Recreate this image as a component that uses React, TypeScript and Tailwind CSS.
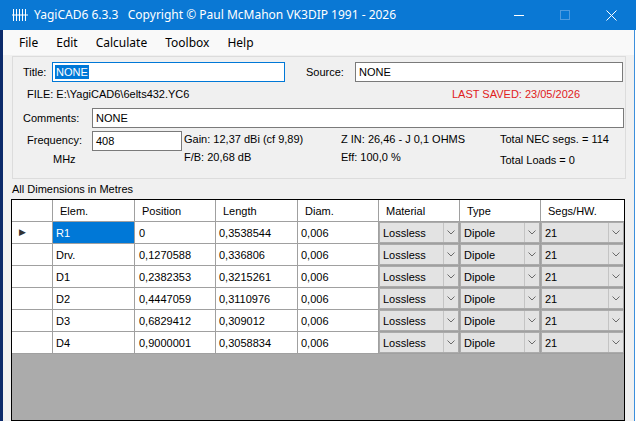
const elements = [
    { name: "R1", pos: "0", len: "0,3538544" },
    { name: "Drv.", pos: "0,1270588", len: "0,336806" },
    { name: "D1", pos: "0,2382353", len: "0,3215261" },
    { name: "D2", pos: "0,4447059", len: "0,3110976" },
    { name: "D3", pos: "0,6829412", len: "0,309012" },
    { name: "D4", pos: "0,9000001", len: "0,3058834" },
];

const menus = ["File", "Edit", "Calculate", "Toolbox", "Help"];

const cols = "grid grid-cols-[41px_82px_81px_82px_81px_81px_81px_83px]";

const AppIcon = () => (
    <svg width="16" height="14" viewBox="0 0 16 14" className="shrink-0">
        <line x1="0" y1="7" x2="16" y2="7" stroke="white" strokeWidth="1" />
        {[1.5, 4.5, 7.5, 10.5, 13.5].map((x) => (
            <line key={x} x1={x} y1="1" x2={x} y2="13" stroke="white" strokeWidth="1" />
        ))}
    </svg>
);

const Combo = ({ value, last }: { value: string; last?: boolean }) => (
    <div className={`h-[22px] border-b border-[#a0a0a0] ${last ? '' : 'border-r'} p-[1px] bg-[#ababab]`}>
        <div className="h-full flex bg-[#e3e3e3]">
            <span className="flex-1 pl-[3px] leading-[21px]">{value}</span>
            <div className="w-[15px] border-l border-[#c4c4c4] flex items-center justify-center">
                <svg width="8" height="5" viewBox="0 0 8 5">
                    <path d="M0.5 0.5 L4 4 L7.5 0.5" fill="none" stroke="#6a6a6a" strokeWidth="1" />
                </svg>
            </div>
        </div>
    </div>
);

const Cell = ({ children, className = "" }: { children?: React.ReactNode; className?: string }) => (
    <div className={`h-[22px] border-r border-b border-[#a0a0a0] leading-[22px] bg-white ${className}`}>
        {children}
    </div>
);

const App = () => {
    return (
        <div className="w-[639px] h-[421px] overflow-hidden flex flex-col bg-white text-black text-[11px] font-['Liberation_Sans',Arial,sans-serif]">
            {/* title bar */}
            <div className="h-[30px] w-[636px] shrink-0 bg-[#0a78d4] text-white flex items-center font-['Noto_Sans',sans-serif]">
                <div className="pl-[12px] pr-[6px]"><AppIcon /></div>
                <span className="text-[12px] whitespace-pre">YagiCAD6 6.3.3   Copyright © Paul McMahon VK3DIP 1991 - 2026</span>
                <div className="ml-auto flex items-center pr-[2px]">
                    <div className="w-[46px] flex justify-center"><div className="w-[10px] h-[1px] bg-white" /></div>
                    <div className="w-[46px] flex justify-center"><div className="w-[10px] h-[10px] border border-[#4f9be0]" /></div>
                    <div className="w-[46px] flex justify-center">
                        <svg width="11" height="11" viewBox="0 0 11 11">
                            <path d="M0.5 0.5 L10.5 10.5 M10.5 0.5 L0.5 10.5" stroke="white" strokeWidth="1" />
                        </svg>
                    </div>
                </div>
            </div>

            <div className="flex-1 flex">
                <div className="w-[3px] bg-[#0c2a6a]" />
                <div className="w-[631px] flex flex-col bg-[#f0f0f0]">
                    {/* menu */}
                    <div className="h-[25px] bg-[#f9f9f9] flex items-center pl-[7px] text-[12px] font-['Noto_Sans',sans-serif]">
                        {menus.map((m) => (
                            <span key={m} className="px-[9px]">{m}</span>
                        ))}
                    </div>

                    {/* group box */}
                    <div className="ml-[9px] mt-[1px] w-[614px] h-[123px] border border-[#dcdcdc] flex flex-col">
                        <div className="flex items-center mt-[5px] h-[20px]">
                            <span className="ml-[10px] w-[29px]">Title:</span>
                            <div className="w-[233px] h-[20px] border border-[#0078d7] bg-white flex items-center pl-[2px]">
                                <span className="bg-[#0078d7] text-white px-[1px] leading-[14px]">NONE</span>
                            </div>
                            <span className="ml-[21px] w-[49px]">Source:</span>
                            <div className="w-[268px] h-[20px] border border-[#7a7a7a] bg-white pl-[3px] leading-[18px]">NONE</div>
                        </div>
                        <div className="flex items-center h-[14px] mt-[5px]">
                            <span className="ml-[14px]">FILE: E:\YagiCAD6\6elts432.YC6</span>
                            <span className="ml-auto mr-[45px] text-[#e02020]">LAST SAVED: 23/05/2026</span>
                        </div>
                        <div className="flex items-center h-[20px] mt-[7px]">
                            <span className="ml-[10px] w-[69px]">Comments:</span>
                            <div className="w-[532px] h-[20px] border border-[#7a7a7a] bg-white pl-[3px] leading-[18px]">NONE</div>
                        </div>
                        <div className="flex mt-[3px]">
                            <div className="w-[79px] flex flex-col items-start pl-[14px]">
                                <span className="leading-[14px] mt-[2px]">Frequency:</span>
                                <span className="leading-[14px] mt-[5px] ml-[26px]">MHz</span>
                            </div>
                            <div className="w-[90px] h-[20px] border border-[#7a7a7a] bg-white pl-[3px] leading-[18px]">408</div>
                            <div className="ml-[2px] w-[157px] flex flex-col">
                                <span className="leading-[14px] mt-[1px]">Gain: 12,37 dBi (cf 9,89)</span>
                                <span className="leading-[14px] mt-[4px]">F/B: 20,68 dB</span>
                            </div>
                            <div className="w-[159px] flex flex-col">
                                <span className="leading-[14px] mt-[1px]">Z IN: 26,46 - J 0,1 OHMS</span>
                                <span className="leading-[14px] mt-[4px]">Eff: 100,0 %</span>
                            </div>
                            <div className="flex flex-col">
                                <span className="leading-[14px] mt-[1px]">Total NEC segs. = 114</span>
                                <span className="leading-[14px] mt-[7px]">Total Loads = 0</span>
                            </div>
                        </div>
                    </div>

                    <div className="ml-[9px] mt-[2px] h-[16px] leading-[16px]">All Dimensions in Metres</div>

                    {/* grid */}
                    <div className="ml-[8px] mt-[2px] w-[614px] flex-1 border border-black bg-[#ababab]">
                        <div className={cols}>
                            <Cell />
                            <Cell className="pl-[7px]">Elem.</Cell>
                            <Cell className="pl-[7px]">Position</Cell>
                            <Cell className="pl-[7px]">Length</Cell>
                            <Cell className="pl-[7px]">Diam.</Cell>
                            <Cell className="pl-[7px]">Material</Cell>
                            <Cell className="pl-[7px]">Type</Cell>
                            <Cell className="pl-[7px] border-r-0">Segs/HW.</Cell>
                        </div>
                        {elements.map((el, i) => (
                            <div key={el.name} className={cols}>
                                <Cell className="flex items-center pl-[7px]">
                                    {i === 0 && <span className="text-[9px] leading-none text-[#333]">▶</span>}
                                </Cell>
                                <Cell className={i === 0 ? "!bg-[#0078d7] text-white pl-[3px]" : "pl-[3px]"}>{el.name}</Cell>
                                <Cell className="pl-[4px]">{el.pos}</Cell>
                                <Cell className="pl-[3px]">{el.len}</Cell>
                                <Cell className="pl-[3px]">0,006</Cell>
                                <Combo value="Lossless" />
                                <Combo value="Dipole" />
                                <Combo value="21" last />
                            </div>
                        ))}
                    </div>
                </div>
                <div className="w-[1px] bg-[#3c8fdc]" />
                <div className="flex-1 bg-white" />
            </div>
        </div>
    );
};

export default App;
